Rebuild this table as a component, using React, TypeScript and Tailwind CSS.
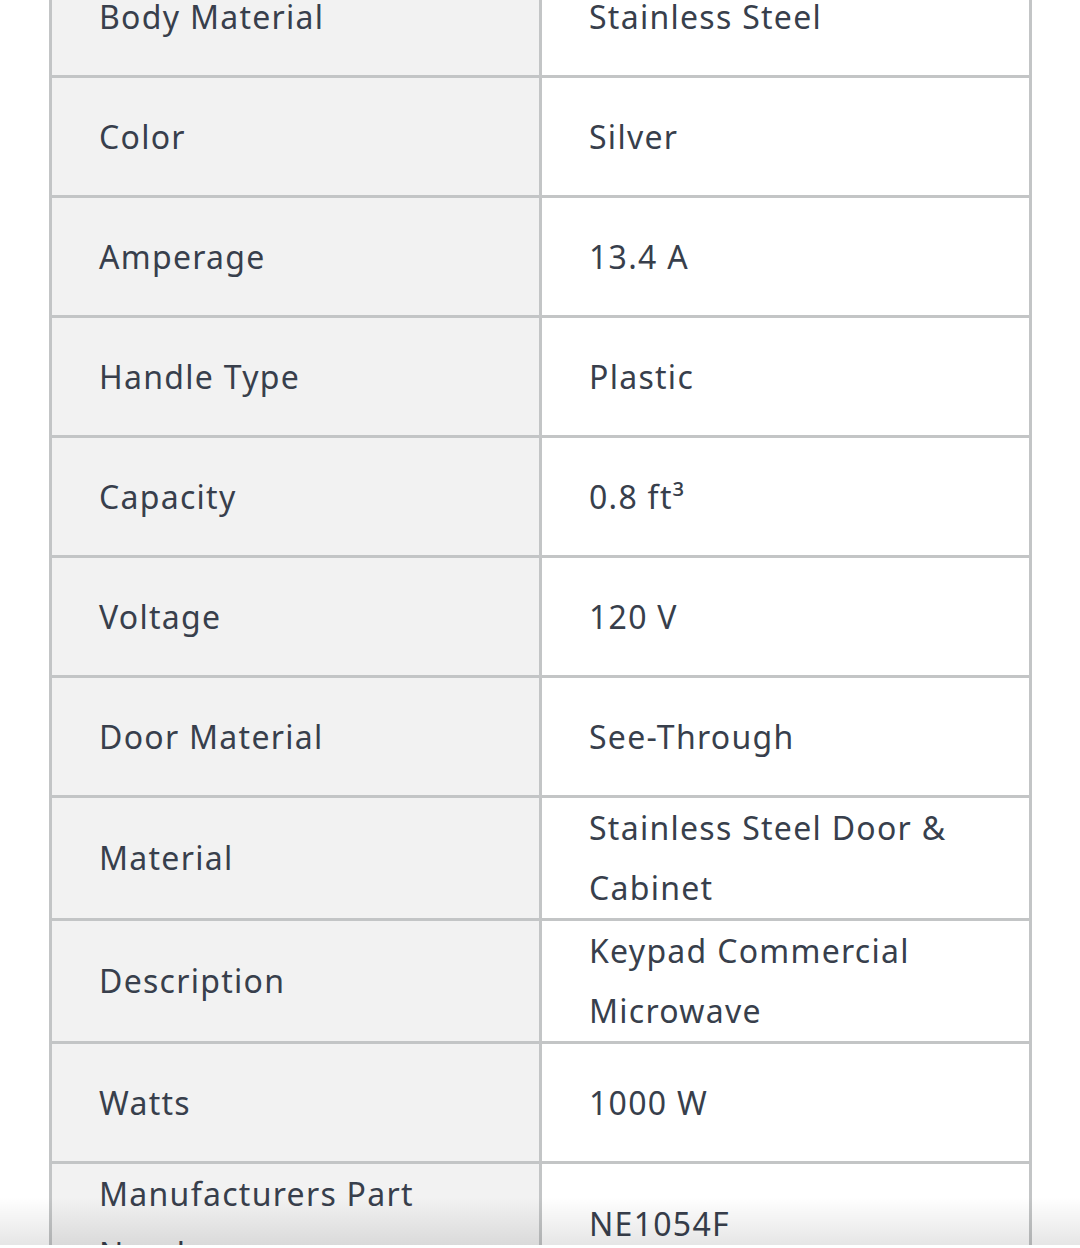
const specs: { label: string; value: string }[] = [
  { label: "Body Material", value: "Stainless Steel" },
  { label: "Color", value: "Silver" },
  { label: "Amperage", value: "13.4 A" },
  { label: "Handle Type", value: "Plastic" },
  { label: "Capacity", value: "0.8 ft³" },
  { label: "Voltage", value: "120 V" },
  { label: "Door Material", value: "See-Through" },
  { label: "Material", value: "Stainless Steel Door & Cabinet" },
  { label: "Description", value: "Keypad Commercial Microwave" },
  { label: "Watts", value: "1000 W" },
  { label: "Manufacturers Part Number", value: "NE1054F" },
];

export default function App() {
  return (
    <div
      className="relative h-[1248px] w-[1080px] overflow-hidden bg-white text-[32px] leading-[60px] tracking-[0.04em] text-[#383f4c]"
      style={{ fontFamily: '"Noto Sans", "Open Sans", sans-serif' }}
    >
      <div className="-mt-[42px] ml-[49px] w-[983px] border-x-[3px] border-[#c3c5c6]">
        {specs.map((row, i) => (
          <div
            key={row.label}
            className={`grid grid-cols-[490px_487px] ${i > 0 ? "border-t-[3px] border-[#c3c5c6]" : ""}`}
          >
            <div className="flex min-h-[117px] items-center border-r-[3px] border-[#c3c5c6] bg-[#f2f2f2] pl-[47px] pr-6">
              {row.label}
            </div>
            <div className="flex min-h-[117px] items-center bg-white pl-[47px] pr-6">
              {row.value}
            </div>
          </div>
        ))}
      </div>

      <div className="pointer-events-none absolute inset-x-0 bottom-[3px] h-[48px] bg-gradient-to-b from-transparent to-black/10" />
      <div className="absolute inset-x-0 bottom-0 h-[3px] bg-white" />
    </div>
  );
}
